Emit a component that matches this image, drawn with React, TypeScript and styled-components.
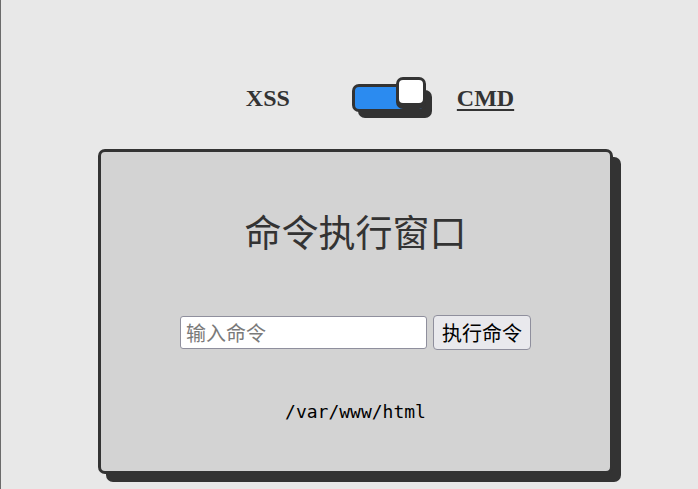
import { useState } from 'react'
import styled, { createGlobalStyle } from 'styled-components'

const GlobalStyle = createGlobalStyle`
  html, body {
    margin: 0;
    padding: 0;
    background: #e8e8e8;
  }
  * {
    box-sizing: border-box;
  }
`

const App = () => {
  const [mode, setMode] = useState<'xss' | 'cmd'>('cmd');
  const [command, setCommand] = useState<string>('');

  const toggleHandler = () => {
    setMode(mode === 'cmd' ? 'xss' : 'cmd');
  };

  return (
    <StyledPage>
      <GlobalStyle />
      <StyledModeBar>
        <StyledModeLabel active={mode === 'xss'}>XSS</StyledModeLabel>
        <StyledSwitch on={mode === 'cmd'} onClick={toggleHandler}>
          <StyledKnob on={mode === 'cmd'} />
        </StyledSwitch>
        <StyledModeLabel active={mode === 'cmd'}>CMD</StyledModeLabel>
      </StyledModeBar>
      <StyledCard>
        <StyledTitle>命令执行窗口</StyledTitle>
        <StyledForm onSubmit={e => e.preventDefault()}>
          <StyledInput
            type="text"
            placeholder="输入命令"
            value={command}
            onChange={e => setCommand(e.target.value)}
          />
          <StyledButton type="submit">执行命令</StyledButton>
        </StyledForm>
        <StyledOutput>/var/www/html</StyledOutput>
      </StyledCard>
    </StyledPage>
  );
}

const StyledPage = styled.div`
  min-height: 100vh;
  border-left: 1px solid #6b6b6b;
  padding: 84px 0 0 97px;
  display: flex;
  flex-direction: column;
`

const StyledModeBar = styled.div`
  width: 515px;
  height: 28px;
  display: flex;
  align-items: center;
  justify-content: center;
  padding-left: 49px;
`

const StyledModeLabel = styled.span<{ active: boolean }>`
  font-family: "Liberation Serif", "Times New Roman", serif;
  font-size: 24px;
  font-weight: bold;
  line-height: 28px;
  color: #333;
  text-decoration: ${p => p.active ? 'underline' : 'none'};
  text-decoration-thickness: 2px;
  text-underline-offset: 3px;
  &:first-child {
    margin-right: 62px;
  }
  &:last-child {
    margin-left: 31px;
  }
`

const StyledSwitch = styled.div<{ on: boolean }>`
  position: relative;
  width: 74px;
  height: 28px;
  border: 3px solid #333;
  border-radius: 7px;
  background: ${p => p.on ? '#2b8bf0' : '#fff'};
  box-shadow: 6px 6px 0 #333;
  cursor: pointer;
`

const StyledKnob = styled.div<{ on: boolean }>`
  position: absolute;
  top: -10px;
  left: ${p => p.on ? '41px' : '-3px'};
  width: 30px;
  height: 29px;
  border: 3px solid #333;
  border-radius: 7px;
  background: #fff;
  box-shadow: 0 3px 0 #333;
`

const StyledCard = styled.div`
  width: 515px;
  height: 325px;
  margin-top: 37px;
  background: #d3d3d3;
  border: 3px solid #333;
  border-radius: 7px;
  box-shadow: 8px 8px 0 #333;
  display: flex;
  flex-direction: column;
  align-items: center;
  padding-top: 61px;
`

const StyledTitle = styled.h1`
  margin: 0;
  font-family: "Liberation Serif", "Noto Sans CJK SC", serif;
  font-size: 37px;
  font-weight: normal;
  line-height: 44px;
  color: #333;
`

const StyledForm = styled.form`
  margin-top: 58px;
  display: flex;
  align-items: center;
  gap: 6px;
`

const StyledInput = styled.input`
  width: 247px;
  height: 33px;
  padding: 0 5px;
  font-family: "Noto Sans CJK SC", sans-serif;
  font-size: 20px;
  background: #fff;
  border: 1px solid #8f8f9d;
  border-radius: 3px;
  color: #000;
  outline: none;
  &::placeholder {
    color: #7a7a7a;
  }
`

const StyledButton = styled.button`
  height: 35px;
  padding: 0 8px;
  font-family: "Noto Sans CJK SC", sans-serif;
  font-size: 20px;
  line-height: 1;
  color: #000;
  background: #e9e9ed;
  border: 1px solid #8f8f9d;
  border-radius: 4px;
  cursor: pointer;
`

const StyledOutput = styled.pre`
  margin: 50px 0 0;
  font-family: "DejaVu Sans Mono", monospace;
  font-size: 18px;
  line-height: 24px;
  color: #000;
`

export default App
